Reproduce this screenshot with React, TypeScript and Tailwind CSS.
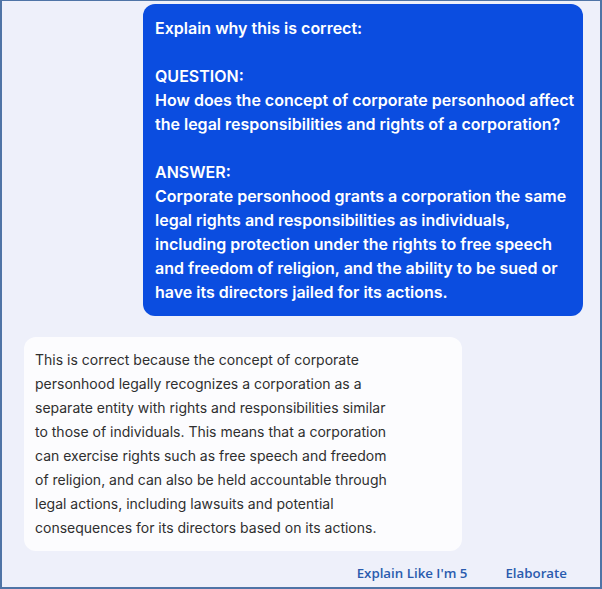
export default function App() {
  const reply = [
    'This is correct because the concept of corporate',
    'personhood legally recognizes a corporation as a',
    'separate entity with rights and responsibilities similar',
    'to those of individuals. This means that a corporation',
    'can exercise rights such as free speech and freedom',
    'of religion, and can also be held accountable through',
    'legal actions, including lawsuits and potential',
    'consequences for its directors based on its actions.',
  ];

  return (
    <div className="h-[589px] w-[602px] overflow-hidden border-x-2 border-b-2 border-t border-[#4f74a6] bg-[#eef0fa] font-['Inter',sans-serif]">
      <div className="flex flex-col px-[17px] pt-[3px]">
        {/* user prompt */}
        <div className="ml-auto w-[440px] rounded-xl bg-[#0b4de0] px-3 py-3 text-[16px] font-semibold leading-6 whitespace-nowrap text-white">
          <p>Explain why this is correct:</p>
          <p className="mt-6">QUESTION:</p>
          <p>
            How does the concept of corporate personhood affect
            <br />
            the legal responsibilities and rights of a corporation?
          </p>
          <p className="mt-6">ANSWER:</p>
          <p>
            Corporate personhood grants a corporation the same
            <br />
            legal rights and responsibilities as individuals,
            <br />
            including protection under the rights to free speech
            <br />
            and freedom of religion, and the ability to be sued or
            <br />
            have its directors jailed for its actions.
          </p>
        </div>

        {/* reply */}
        <div className="mt-[21px] ml-[5px] w-[438px] rounded-xl bg-[#fcfcfe] p-[11px] text-[14px] leading-6 whitespace-nowrap text-[#2f2f2f]">
          {reply.map((line) => (
            <p key={line}>{line}</p>
          ))}
        </div>

        <div className="mt-[13px] flex justify-end gap-[38px] pr-[16px] font-['Open_Sans',sans-serif] text-[13.3px] font-semibold text-[#2a5bae]">
          <button>Explain Like I'm 5</button>
          <button>Elaborate</button>
        </div>
      </div>
    </div>
  );
}
